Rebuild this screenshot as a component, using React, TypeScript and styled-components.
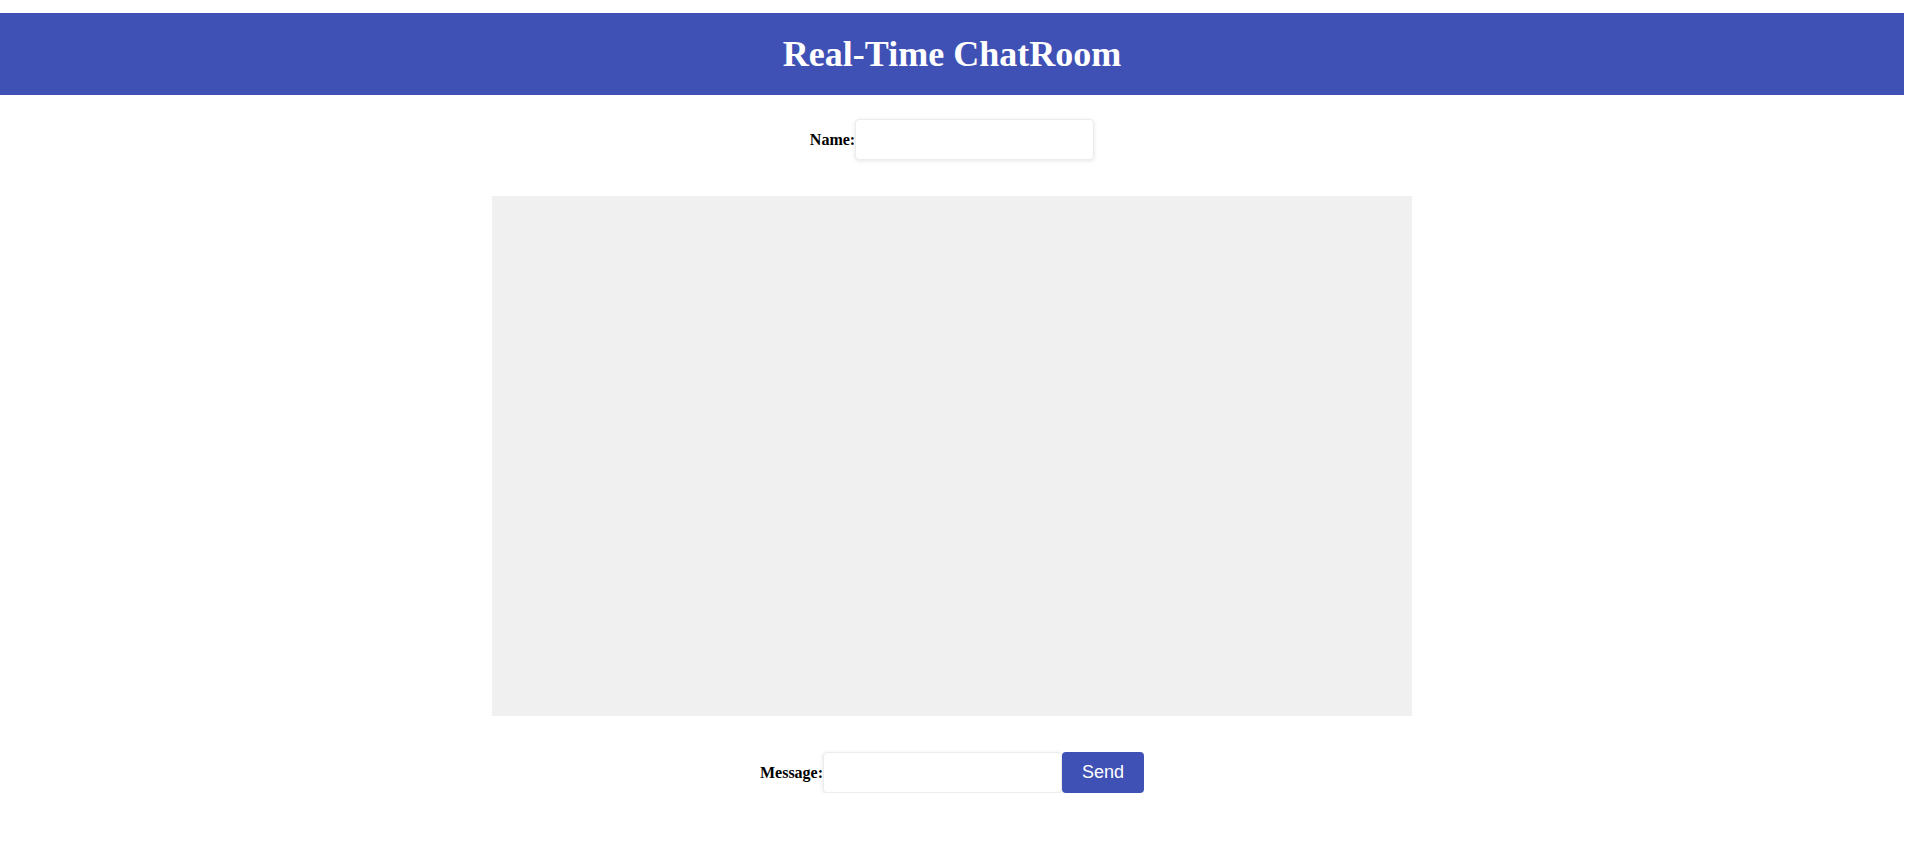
import React from "react";
import styled, { createGlobalStyle } from "styled-components";

const GlobalStyle = createGlobalStyle`
  html, body {
    margin: 0;
    padding: 0;
    background: #ffffff;
  }
  body {
    font-family: "Liberation Serif", "Times New Roman", serif;
    color: #000;
  }
`;

const Page = styled.div`
  width: 1904px;
  display: flex;
  flex-direction: column;
  align-items: center;
  padding-top: 13px;
`;

const Header = styled.header`
  align-self: stretch;
  height: 82px;
  background: #3f51b5;
  display: flex;
  align-items: center;
  justify-content: center;
`;

const Title = styled.h1`
  margin: 0;
  font-family: "Liberation Serif", "Times New Roman", serif;
  font-size: 36px;
  font-weight: bold;
  color: #ffffff;
`;

const Row = styled.div<{ $top: number }>`
  display: flex;
  align-items: center;
  margin-top: ${(p) => p.$top}px;
`;

const Label = styled.label`
  font-family: "Liberation Serif", "Times New Roman", serif;
  font-size: 16px;
  font-weight: bold;
  line-height: 18px;
`;

const TextInput = styled.input`
  box-sizing: border-box;
  width: 239px;
  height: 41px;
  padding: 10px;
  border: 1px solid #ececec;
  border-radius: 4px;
  box-shadow: 0 1px 4px rgba(0, 0, 0, 0.1);
  font-family: "Liberation Sans", Arial, sans-serif;
  font-size: 16px;
  outline: none;
  background: #fff;
`;

const ChatBox = styled.div`
  width: 920px;
  height: 520px;
  margin-top: 36px;
  background: #f0f0f0;
`;

const SendButton = styled.button`
  box-sizing: border-box;
  width: 82px;
  height: 41px;
  padding: 10px 20px;
  border: none;
  border-radius: 4px;
  background: #3f51b5;
  color: #ffffff;
  font-family: "Liberation Sans", Arial, sans-serif;
  font-size: 18px;
  cursor: pointer;
`;

export default function App() {
  return (
    <>
      <GlobalStyle />
      <Page>
        <Header>
          <Title>Real-Time ChatRoom</Title>
        </Header>
        <Row $top={24}>
          <Label htmlFor="name">Name:</Label>
          <TextInput id="name" type="text" />
        </Row>
        <ChatBox />
        <Row $top={36}>
          <Label htmlFor="message">Message:</Label>
          <TextInput id="message" type="text" />
          <SendButton>Send</SendButton>
        </Row>
      </Page>
    </>
  );
}
